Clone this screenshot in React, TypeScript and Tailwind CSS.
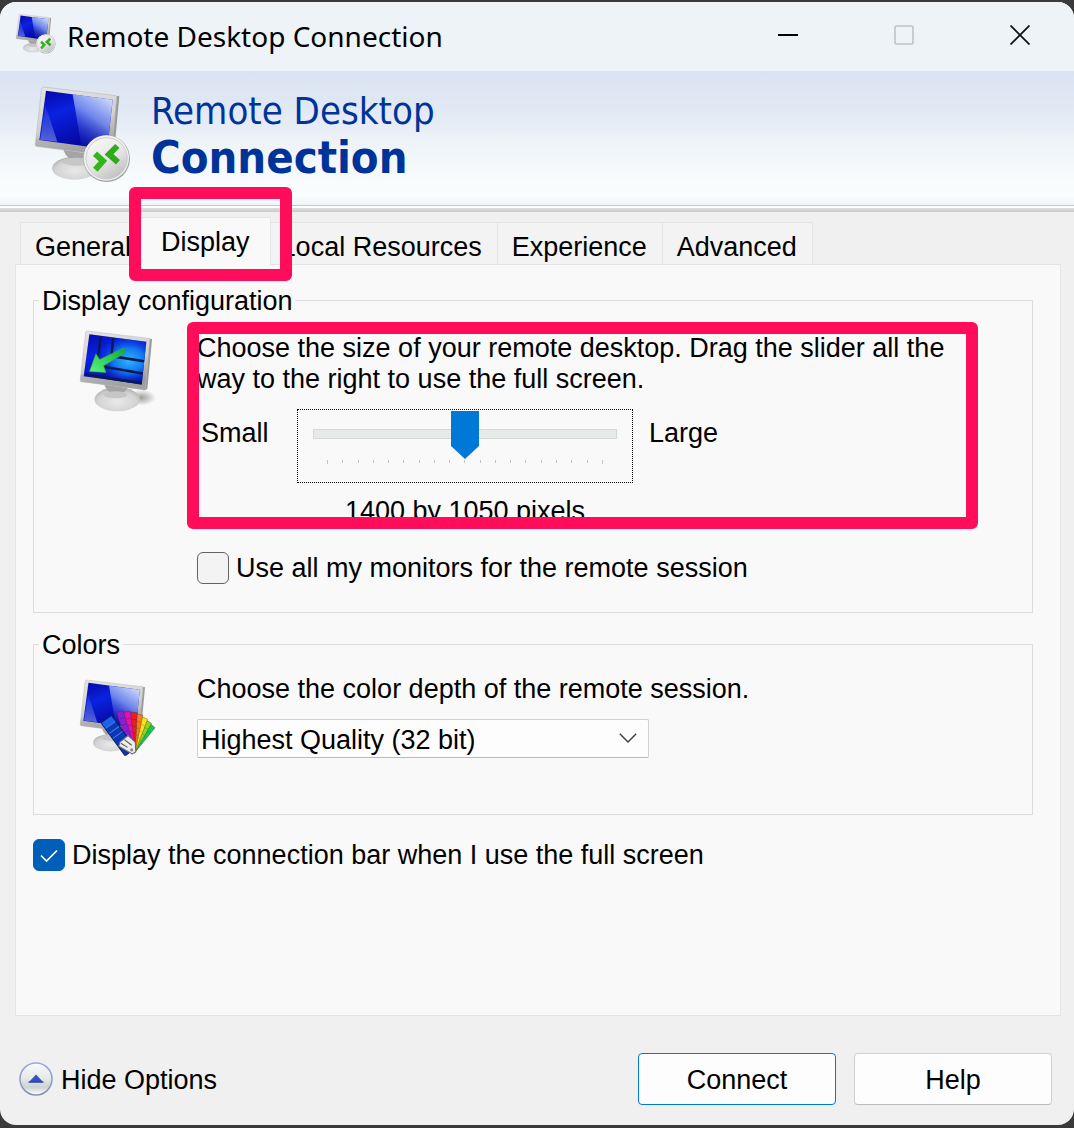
import { useId, useState } from "react";
import type { ReactNode } from "react";

function Monitor({
  className,
  glare = true,
  screen,
  children,
}: {
  className: string;
  glare?: boolean;
  screen?: ReactNode;
  children?: ReactNode;
}) {
  const id = useId();
  const frame = `${id}-frame`;
  const blue = `${id}-blue`;
  const shine = `${id}-shine`;
  const wedge = `${id}-wedge`;
  const base = `${id}-base`;
  const shadow = `${id}-shadow`;
  return (
    <svg viewBox="45 36 288 288" className={className} overflow="visible" aria-hidden="true">
      <defs>
        <linearGradient id={frame} x1="0" y1="0" x2="0.3" y2="1">
          <stop offset="0" stopColor="#e4e4e2" />
          <stop offset="0.6" stopColor="#d2d2d0" />
          <stop offset="1" stopColor="#9c9c9c" />
        </linearGradient>
        <linearGradient id={blue} x1="0" y1="0" x2="0.5" y2="1">
          <stop offset="0" stopColor="#0404a4" />
          <stop offset="0.4" stopColor="#0a22e0" />
          <stop offset="1" stopColor="#04049a" />
        </linearGradient>
        <linearGradient id={shine} x1="0.8" y1="0" x2="0.3" y2="1">
          <stop offset="0" stopColor="#dce6ff" stopOpacity="0.95" />
          <stop offset="0.45" stopColor="#7f98f0" stopOpacity="0.85" />
          <stop offset="1" stopColor="#1020c0" stopOpacity="0.2" />
        </linearGradient>
        <linearGradient id={wedge} x1="0" y1="0" x2="0" y2="1">
          <stop offset="0" stopColor="#4f66e0" stopOpacity="0.2" />
          <stop offset="1" stopColor="#8c9cec" stopOpacity="0.6" />
        </linearGradient>
        <radialGradient id={base} cx="0.5" cy="0.6" r="0.6">
          <stop offset="0" stopColor="#e9e9e9" />
          <stop offset="0.7" stopColor="#d4d4d4" />
          <stop offset="1" stopColor="#b0b0b0" />
        </radialGradient>
        <radialGradient id={shadow}>
          <stop offset="0" stopColor="#777777" stopOpacity="0.7" />
          <stop offset="1" stopColor="#777777" stopOpacity="0" />
        </radialGradient>
      </defs>
      {!glare && <ellipse cx="260" cy="270" rx="52" ry="28" fill={`url(#${shadow})`} />}
      <ellipse cx={glare ? 164 : 176} cy={glare ? 280 : 276} rx={glare ? 68 : 80} ry={glare ? 34 : 42} fill={`url(#${base})`} />
      <path d="M130 224 L212 236 Q200 258 168 258 Q140 254 130 224Z" fill="#a4a4a4" />
      <ellipse cx="170" cy="260" rx="42" ry="12" fill="#c6c6c6" />
      <path d="M286 62 L298 64 L282 236 Q278 246 266 243Z" fill="#9a9a98" />
      <path
        d="M70 36 L288 62 Q291 63 290 68 L274 238 Q273 243 267 242 L49 214 Q45 213 46 208 L65 40 Q66 36 70 36Z"
        fill={`url(#${frame})`}
        stroke="#bdbdbb"
        strokeWidth="2"
      />
      <path d="M46 206 L48 190 L272 222 L270 242 L49 214Z" fill="#a8a8a8" opacity="0.5" />
      <path d="M78 47 L278 74 L262 223 L58 195Z" fill={`url(#${blue})`} />
      {glare && (
        <>
          <path d="M158 58 L278 74 L266 184 L262 223 L184 212Z" fill={`url(#${shine})`} />
          <path d="M76 90 L62 184 L60 194 L112 200Z" fill={`url(#${wedge})`} />
        </>
      )}
      {screen}
      {children}
    </svg>
  );
}

function RemoteIcon({ className }: { className: string }) {
  const id = useId();
  return (
    <Monitor className={className}>
      <defs>
        <linearGradient id={`${id}-disc`} x1="0" y1="0" x2="0.6" y2="1">
          <stop offset="0" stopColor="#fbfbfb" />
          <stop offset="0.6" stopColor="#e6e6e6" />
          <stop offset="1" stopColor="#c4c4c4" />
        </linearGradient>
      </defs>
      <circle cx="260" cy="251" r="70" fill="#a2a2a2" />
      <circle cx="259" cy="249" r="68" fill="#f2f2f2" />
      <circle cx="260" cy="250" r="62" fill={`url(#${id}-disc)`} stroke="#cccccc" strokeWidth="3" />
      <path d="M225 236 L249 258 L226 284" fill="none" stroke="#35b41d" strokeWidth="18" />
      <path d="M292 213 L267 238 L294 262" fill="none" stroke="#2eab1a" strokeWidth="18" />
    </Monitor>
  );
}

function DisplayIcon({ className }: { className: string }) {
  const id = useId();
  return (
    <Monitor
      className={className}
      glare={false}
      screen={
        <>
          <defs>
            <radialGradient id={`${id}-glow`} cx="0.72" cy="0.52" r="0.5">
              <stop offset="0" stopColor="#2fb4ff" />
              <stop offset="0.5" stopColor="#1275f2" />
              <stop offset="1" stopColor="#0a1fd8" stopOpacity="0.2" />
            </radialGradient>
            <linearGradient id={`${id}-arrow`} x1="0" y1="1" x2="1" y2="0">
              <stop offset="0" stopColor="#5cf777" />
              <stop offset="1" stopColor="#12a53a" />
            </linearGradient>
          </defs>
          <path d="M78 47 L278 74 L262 223 L58 195Z" fill={`url(#${id}-glow)`} />
          <path
            d="M118 54 L108 130 M162 60 L156 116 M168 126 L270 142 M118 160 L266 185 M62 188 L262 220"
            fill="none"
            stroke="#0a1a50"
            strokeWidth="9"
          />
          <path
            d="M78 178 L101 116 L114 136 L198 96 Q208 102 202 114 L128 158 L136 182Z"
            fill={`url(#${id}-arrow)`}
            stroke="#1fb246"
            strokeWidth="2"
          />
        </>
      }
    />
  );
}

const swatches = [
  { angle: 39, length: 128, color: "#14c850" },
  { angle: 30, length: 132, color: "#8ed61c" },
  { angle: 21, length: 138, color: "#f6e61a" },
  { angle: 12, length: 145, color: "#f2801a" },
  { angle: 3, length: 150, color: "#ea2020" },
  { angle: -7, length: 154, color: "#e012b0" },
  { angle: -17, length: 160, color: "#8a1fd0" },
];

function ColorsIcon({ className }: { className: string }) {
  return (
    <Monitor className={className}>
      {swatches.map((s) => (
        <g key={s.angle} transform={`rotate(${s.angle} 246 312)`}>
          <rect x="234" y={312 - s.length} width="26" height={s.length} rx="3" fill={s.color} stroke="#3a2a3a" strokeOpacity="0.45" strokeWidth="3" />
          <path
            d={`M237 ${340 - s.length}h20M237 ${366 - s.length}h20M237 ${392 - s.length}h20`}
            stroke="#000000"
            strokeOpacity="0.22"
            strokeWidth="3"
          />
        </g>
      ))}
      <g transform="rotate(-36 246 312)">
        <rect x="214" y="154" width="50" height="158" rx="5" fill="#0c37b4" stroke="#0a1e6a" strokeWidth="4" />
        <rect x="216" y="156" width="46" height="24" rx="3" fill="#1f62e8" />
        <path d="M216 182h46M216 206h46M216 230h46" stroke="#3c7cf4" strokeWidth="4" />
      </g>
      <path d="M200 278 L232 252 L260 278 L262 316 L248 324 L196 294Z" fill="#ececec" stroke="#6a6a6a" strokeWidth="4" />
      <path d="M204 282 L230 298 M218 268 L246 290" stroke="#555555" strokeWidth="4" />
      <circle cx="246" cy="308" r="6" fill="#8a8a8a" />
    </Monitor>
  );
}

function Checkbox({
  id,
  label,
  checked,
  onChange,
}: {
  id: string;
  label: string;
  checked: boolean;
  onChange: (value: boolean) => void;
}) {
  return (
    <div className="flex items-center gap-[7px]">
      <span className="relative flex size-8 shrink-0">
        <input
          id={id}
          type="checkbox"
          checked={checked}
          onChange={(e) => onChange(e.target.checked)}
          className="size-8 appearance-none rounded-md border border-[#626262] bg-[#f3f3f3] checked:border-[#005fb8] checked:bg-[#005fb8]"
        />
        {checked && (
          <svg viewBox="0 0 32 32" className="pointer-events-none absolute inset-0" aria-hidden="true">
            <path d="M8 16.5 L13.5 22 L24 11.5" fill="none" stroke="#ffffff" strokeWidth="1.6" />
          </svg>
        )}
      </span>
      <label htmlFor={id} className="pt-0.5">
        {label}
      </label>
    </div>
  );
}

const tabClass = "border-t border-r border-[#e5e5e5] bg-[#f3f3f3] pt-[9px] pr-[15px] pb-px pl-3.5";

export default function App() {
  const [size, setSize] = useState(9);
  const [allMonitors, setAllMonitors] = useState(false);
  const [connectionBar, setConnectionBar] = useState(true);

  return (
    <div className="flex min-h-screen flex-col bg-[#3a3a3a] pt-0.5 pb-[3px] font-['Liberation_Sans',Arial,sans-serif] text-[27px] leading-[31px] text-black">
      <main className="flex flex-1 flex-col overflow-hidden rounded-2xl bg-[#f0f0f0]">
        <header className="flex items-start bg-[#eef3f8] pr-[30px] pl-4">
          <RemoteIcon className="mt-3 size-10" />
          <h1 className="ml-[11px] flex-1 py-4 font-['Noto_Sans',sans-serif] text-[28px] leading-[37px]">
            Remote Desktop Connection
          </h1>
          <div className="mt-[9px] flex gap-[68px]">
            <button type="button" aria-label="Minimize" className="grid size-12 place-items-center">
              <svg width="20" height="20" viewBox="0 0 20 20" aria-hidden="true">
                <path d="M0 10h20" stroke="#000000" strokeWidth="2" />
              </svg>
            </button>
            <button type="button" aria-label="Maximize" disabled className="grid size-12 place-items-center">
              <svg width="20" height="20" viewBox="0 0 20 20" aria-hidden="true">
                <rect x="1" y="1" width="18" height="18" rx="1.5" fill="none" stroke="#bfc2c6" strokeWidth="1.6" />
              </svg>
            </button>
            <button type="button" aria-label="Close" className="grid size-12 place-items-center">
              <svg width="20" height="20" viewBox="0 0 20 20" aria-hidden="true">
                <path d="M0.5 0.5 L19.5 19.5 M19.5 0.5 L0.5 19.5" stroke="#111111" strokeWidth="1.8" />
              </svg>
            </button>
          </div>
        </header>

        <section className="flex items-start gap-5 border-b border-[#c8c8cc] bg-[linear-gradient(#dae3f2_0%,#dfe8f3_25%,#e7edf7_42%,#edf2f6_50%,#f4f8fb_68%,#f9fcfd_85%,#f9fcfd_93%,#f1f5fa_100%)] pt-4 pb-[22px] pl-[35px]">
          <RemoteIcon className="size-24" />
          <h2 className="font-['DejaVu_Sans_Condensed','DejaVu_Sans',sans-serif] text-[#003399]">
            <span className="block text-[38px] leading-[48px]">Remote Desktop</span>
            <span className="block text-[45px] leading-[46px] font-bold">Connection</span>
          </h2>
        </section>
        <div className="h-1.5 border-t-2 border-b-2 border-t-white border-b-[#cfcfcf] bg-[#dadada]" />

        <div className="flex flex-1 flex-col px-[15px] pt-[5px]">
          <div role="tablist" className="flex items-end px-[5px]">
            <button type="button" role="tab" aria-selected="false" className={`${tabClass} border-l`}>
              General
            </button>
            <div className="relative z-20 -mr-1 -mb-px -ml-1.5">
              <button
                type="button"
                role="tab"
                aria-selected="true"
                className="border-t border-r border-[#e5e5e5] bg-[#f9f9f9] px-5 pt-[9px] pb-[7px]"
              >
                Display
              </button>
              <span className="pointer-events-none absolute -top-[30px] -right-[21px] -bottom-4 -left-3 rounded-md border-12 border-[#ff0d5a]" />
            </div>
            <button type="button" role="tab" aria-selected="false" className={tabClass}>
              Local Resources
            </button>
            <button type="button" role="tab" aria-selected="false" className={tabClass}>
              Experience
            </button>
            <button type="button" role="tab" aria-selected="false" className={tabClass}>
              Advanced
            </button>
          </div>

          <div
            role="tabpanel"
            aria-label="Display"
            className="mr-[-2px] flex-1 border border-[#e5e5e5] bg-[#f9f9f9] pt-[18px] pr-[27px] pb-10 pl-[17px]"
          >
            <fieldset className="border border-[#dcdcdc] pb-7 pl-[5px]">
              <legend className="px-[3px] pt-[3px]">Display configuration</legend>
              <div className="flex items-start pt-[14px]">
                <DisplayIcon className="ml-[41px] size-[82px] shrink-0" />
                <div className="relative ml-[35px] flex-1 pt-0.5">
                  <p className="max-w-[770px]">
                    Choose the size of your remote desktop. Drag the slider all the way to the right to use the full
                    screen.
                  </p>
                  <div className="mt-[14px] flex items-start pl-1">
                    <label htmlFor="size" className="w-24 pt-[9px]">
                      Small
                    </label>
                    <div>
                      <div className="w-[336px] border border-dotted border-black px-[15px] pt-px pb-[18px]">
                        <input
                          id="size"
                          type="range"
                          min={0}
                          max={18}
                          value={size}
                          onChange={(e) => setSize(Number(e.target.value))}
                          className="block h-[46px] w-full appearance-none bg-transparent [&::-webkit-slider-runnable-track]:h-[10px] [&::-webkit-slider-runnable-track]:border [&::-webkit-slider-runnable-track]:border-[#d6d8d8] [&::-webkit-slider-runnable-track]:bg-[#e7eaea] [&::-webkit-slider-thumb]:-mt-[19px] [&::-webkit-slider-thumb]:h-12 [&::-webkit-slider-thumb]:w-7 [&::-webkit-slider-thumb]:appearance-none [&::-webkit-slider-thumb]:bg-[#0078d7] [&::-webkit-slider-thumb]:[clip-path:polygon(0_0,100%_0,100%_73%,50%_100%,0_73%)]"
                        />
                        <div className="mt-[3px] flex justify-between px-3.5">
                          {Array.from({ length: 19 }, (_, i) => (
                            <span key={i} className="h-[3px] w-px bg-[#c4c4c4] first:h-1 last:h-1" />
                          ))}
                        </div>
                      </div>
                      <output htmlFor="size" className="mt-[13px] block text-center">
                        1400 by 1050 pixels
                      </output>
                    </div>
                    <span className="pt-[9px] pl-4">Large</span>
                  </div>
                  <span className="pointer-events-none absolute -top-[9px] -left-2.5 h-[207px] w-[791px] rounded-md border-12 border-[#ff0d5a]" />
                  <div className="mt-6">
                    <Checkbox
                      id="monitors"
                      label="Use all my monitors for the remote session"
                      checked={allMonitors}
                      onChange={setAllMonitors}
                    />
                  </div>
                </div>
              </div>
            </fieldset>

            <fieldset className="mt-[14px] border border-[#dcdcdc] pb-14 pl-[5px]">
              <legend className="px-[3px] pt-[3px]">Colors</legend>
              <div className="flex items-start pt-[13px]">
                <ColorsIcon className="mt-1.5 ml-[41px] size-[74px] shrink-0" />
                <div className="ml-[43px]">
                  <label htmlFor="depth" className="block">
                    Choose the color depth of the remote session.
                  </label>
                  <div className="relative mt-[14px] w-[452px]">
                    <select
                      id="depth"
                      className="block h-[39px] w-full appearance-none rounded-xs border border-[#d0d0d0] border-b-[#bababa] bg-[#fdfdfd] pt-1 pl-[3px]"
                    >
                      <option>Highest Quality (32 bit)</option>
                    </select>
                    <svg
                      viewBox="0 0 18 10"
                      className="pointer-events-none absolute top-[14px] right-3 h-2.5 w-[18px]"
                      aria-hidden="true"
                    >
                      <path d="M0.8 0.8 L9 9 L17.2 0.8" fill="none" stroke="#444444" strokeWidth="1.5" />
                    </svg>
                  </div>
                </div>
              </div>
            </fieldset>

            <div className="mt-[23px]">
              <Checkbox
                id="bar"
                label="Display the connection bar when I use the full screen"
                checked={connectionBar}
                onChange={setConnectionBar}
              />
            </div>
          </div>
        </div>

        <footer className="flex items-center gap-[18px] pt-[37px] pr-[22px] pb-5 pl-[19px]">
          <button type="button" className="mr-auto flex items-center gap-2">
            <svg viewBox="0 0 34 34" className="size-[34px]" aria-hidden="true">
              <defs>
                <linearGradient id="hide-face" x1="0" y1="0" x2="0" y2="1">
                  <stop offset="0" stopColor="#fafbfb" />
                  <stop offset="0.5" stopColor="#e4e8e6" />
                  <stop offset="0.75" stopColor="#cdd3d0" />
                  <stop offset="1" stopColor="#ffffff" />
                </linearGradient>
                <linearGradient id="hide-rim" x1="0" y1="0" x2="0" y2="1">
                  <stop offset="0" stopColor="#9aa8e8" />
                  <stop offset="1" stopColor="#8695b4" />
                </linearGradient>
              </defs>
              <circle cx="17" cy="17" r="16" fill="url(#hide-face)" stroke="url(#hide-rim)" strokeWidth="1.6" />
              <path d="M9.5 20.5 L17 12.5 L24.5 20.5Z" fill="#3350c4" />
              <path d="M9.5 20 H24.5" stroke="#223a94" strokeWidth="1.2" />
            </svg>
            <span className="pt-0.5">Hide Options</span>
          </button>
          <button
            type="button"
            className="w-[198px] rounded-sm border border-[#0078d4] bg-[#fdfdfd] pt-[11px] pb-[9px] leading-[30px]"
          >
            Connect
          </button>
          <button
            type="button"
            className="w-[198px] rounded-sm border border-[#d0d0d0] border-b-[#bababa] bg-[#fdfdfd] pt-[11px] pb-[9px] leading-[30px]"
          >
            Help
          </button>
        </footer>
      </main>
    </div>
  );
}
